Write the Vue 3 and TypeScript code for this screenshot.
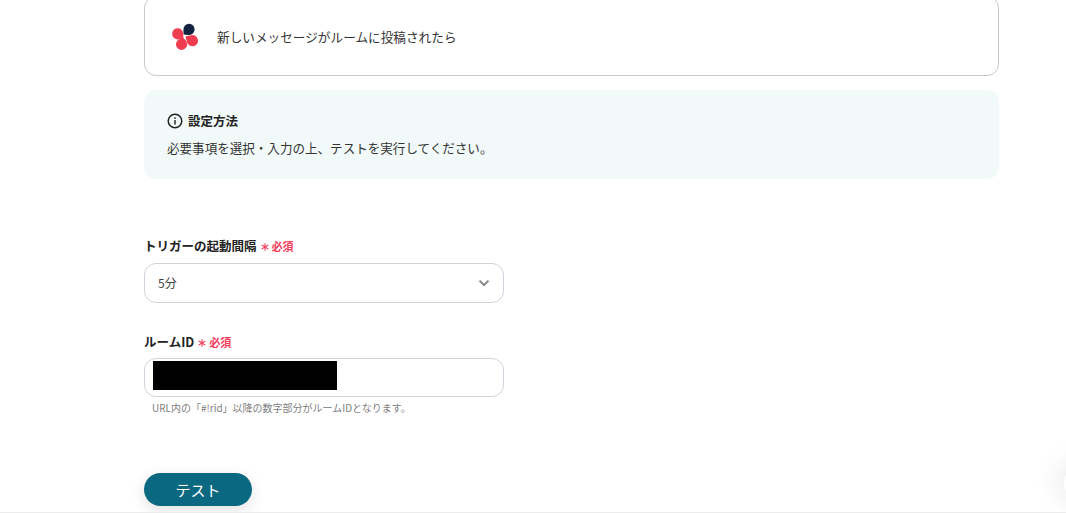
<script setup lang="ts">
interface Petal {
  cx: number
  cy: number
  tx: number
  ty: number
  fill: string
}

const r = 5.6
const source: Petal[] = [
  { cx: 18, cy: 7.4, tx: 12.6, ty: 12.4, fill: '#12233f' },
  { cx: 6.7, cy: 11.8, tx: 12.4, ty: 16.4, fill: '#f03d50' },
  { cx: 10.6, cy: 22.3, tx: 12, ty: 15.4, fill: '#f03d50' },
  { cx: 21.4, cy: 18.6, tx: 14.4, ty: 14.6, fill: '#f03d50' },
]

function petalPath(p: Petal): string {
  const dx = p.tx - p.cx
  const dy = p.ty - p.cy
  const d = Math.hypot(dx, dy)
  const base = Math.atan2(dy, dx)
  const off = Math.acos(r / d)
  const a1 = base - off
  const a2 = base + off
  const x1 = p.cx + r * Math.cos(a1)
  const y1 = p.cy + r * Math.sin(a1)
  const x2 = p.cx + r * Math.cos(a2)
  const y2 = p.cy + r * Math.sin(a2)
  return `M${p.tx} ${p.ty}L${x2} ${y2}A${r} ${r} 0 1 1 ${x1} ${y1}Z`
}

const petals = source.map((p) => ({ d: petalPath(p), fill: p.fill }))
</script>

<template>
  <div class="page">
    <main class="content">
      <section class="app-card">
        <svg class="logo" viewBox="0 0 28 28" width="28" height="28" aria-hidden="true">
          <path v-for="(p, i) in petals" :key="i" :d="p.d" :fill="p.fill" />
        </svg>
        <span class="app-text">新しいメッセージがルームに投稿されたら</span>
      </section>

      <section class="info">
        <h2 class="info-title">
          <svg viewBox="0 0 16 16" width="16" height="16" aria-hidden="true">
            <circle cx="8" cy="8" r="6.8" fill="none" stroke="#222" stroke-width="1.5" />
            <rect x="7.3" y="7" width="1.4" height="4.6" fill="#222" />
            <rect x="7.3" y="4.3" width="1.4" height="1.6" fill="#222" />
          </svg>
          設定方法
        </h2>
        <p class="info-text">必要事項を選択・入力の上、テストを実行してください。</p>
      </section>

      <section class="field first">
        <label class="label">
          トリガーの起動間隔
          <span class="req">
            <svg class="star" viewBox="0 0 8 8" width="8" height="8" aria-hidden="true">
              <path d="M4 .2V7.8M.7 2.1L7.3 5.9M7.3 2.1L.7 5.9" stroke="#f0405c" stroke-width="1.1" fill="none" />
            </svg>
            必須
          </span>
        </label>
        <div class="control select">
          <span class="select-value">5分</span>
          <svg viewBox="0 0 12 8" width="12" height="8" aria-hidden="true">
            <path d="M1.5 1.6 L6 6 L10.5 1.6" fill="none" stroke="#888" stroke-width="2" />
          </svg>
        </div>
      </section>

      <section class="field second">
        <label class="label tight">
          ルームID
          <span class="req">
            <svg class="star" viewBox="0 0 8 8" width="8" height="8" aria-hidden="true">
              <path d="M4 .2V7.8M.7 2.1L7.3 5.9M7.3 2.1L.7 5.9" stroke="#f0405c" stroke-width="1.1" fill="none" />
            </svg>
            必須
          </span>
        </label>
        <div class="control input">
          <div class="redacted"></div>
        </div>
        <p class="help">URL内の「#!rid」以降の数字部分がルームIDとなります。</p>
      </section>

      <button class="test" type="button">テスト</button>
    </main>
    <div class="float-shadow"></div>
  </div>
</template>

<style scoped>
.page {
  position: relative;
  width: 1066px;
  height: 513px;
  overflow: hidden;
  background: #fff;
  border-bottom: 1px solid #ececec;
  box-sizing: border-box;
  font-family: "Noto Sans CJK JP", "Noto Sans", sans-serif;
  color: #222;
}
.content {
  width: 855px;
  margin-left: 144px;
  margin-top: -4px;
  display: flex;
  flex-direction: column;
  align-items: flex-start;
}
.app-card {
  width: 100%;
  height: 80px;
  box-sizing: border-box;
  border: 1px solid #c9c9c9;
  border-radius: 12px;
  display: flex;
  align-items: center;
  gap: 18px;
  padding: 0 0 0 26px;
}
.logo { flex: none; }
.app-text {
  font-size: 12.65px;
  color: #333;
}
.info {
  width: 100%;
  height: 89px;
  margin-top: 14px;
  box-sizing: border-box;
  background: #f2faf9;
  border-radius: 12px;
  padding: 22px 23px 0;
}
.info-title {
  display: flex;
  align-items: center;
  gap: 5px;
  margin: 0;
  font-size: 12.5px;
  line-height: 18px;
  font-weight: 700;
  color: #222;
}
.info-text {
  margin: 9px 0 0;
  font-size: 12.55px;
  line-height: 18px;
  color: #333;
}
.field {
  width: 360px;
}
.field.first { margin-top: 58px; }
.field.second { margin-top: 30px; }
.label {
  display: flex;
  align-items: center;
  gap: 4px;
  font-size: 12.5px;
  line-height: 18px;
  font-weight: 700;
  color: #222;
  margin-bottom: 8px;
}
.label.tight { margin-bottom: 7px; }
.req {
  display: inline-flex;
  align-items: center;
  gap: 3px;
  color: #f0405c;
  font-size: 11px;
}
.star {
  flex: none;
  margin-top: 2px;
}
.control {
  box-sizing: border-box;
  width: 360px;
  border: 1px solid #cfd3dc;
  border-radius: 12px;
  background: #fff;
}
.select {
  height: 40px;
  display: flex;
  align-items: center;
  justify-content: space-between;
  padding: 0 13px;
  font-size: 12px;
  color: #444;
}
.select-value {
  line-height: 16px;
  margin-bottom: 1px;
}
.input {
  height: 39px;
  padding: 2px 8px;
}
.redacted {
  width: 184px;
  height: 29px;
  background: #000;
}
.help {
  margin: 4px 0 0 8px;
  font-size: 10px;
  line-height: 14px;
  color: #808080;
}
.test {
  margin-top: 58px;
  width: 108px;
  height: 33px;
  border: none;
  border-radius: 17px;
  background: #0a6880;
  color: #fff;
  font-family: inherit;
  font-size: 15px;
  box-shadow: 0 4px 14px rgba(0, 0, 0, 0.12);
  padding: 0;
}
.float-shadow {
  position: absolute;
  right: -20px;
  top: 468px;
  width: 22px;
  height: 30px;
  border-radius: 50%;
  box-shadow: 0 0 24px 10px rgba(0, 0, 0, 0.06);
}
</style>
